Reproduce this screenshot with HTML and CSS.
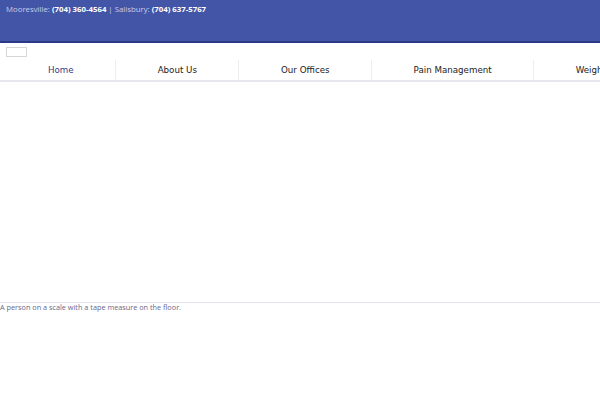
FILE: index.html
```html
<!DOCTYPE html>
<html>
<head>
	<meta charset="UTF-8">
	<title>Weight Loss</title>
	<link rel="stylesheet" href="styles.css">
</head>
<body>
	<div class="topbar">
		<div class="phones">
			Mooresville: <b>(704) 360-4564</b> | Salisbury: <b>(704) 637-5767</b>
		</div>
	</div>
	<div class="menubtn"></div>
	<ul class="nav">
		<li class="active">Home</li>
		<li>About Us</li>
		<li>Our Offices</li>
		<li>Pain Management</li>
		<li>Weight Loss</li>
	</ul>
	<div class="hero"></div>
	<div class="caption">A person on a scale with a tape measure on the floor.</div>
</body>
</html>
```

FILE: styles.css
```css
*{
	margin:0px;
	padding:0px;
}
body{
	width: 600px;
	height: 400px;
	overflow: hidden;
	background: #fff;
	font-family: "DejaVu Sans", sans-serif;
}
.topbar{
	height: 41px;
	background-color: #4355a6;
	border-bottom: 2px solid #2d3888;
}
.phones{
	font-family: "Open Sans", sans-serif;
	font-size: 7.8px;
	line-height: 18px;
	padding-left: 6px;
	color: #c9cdeb;
}
.phones b{
	color: #fff;
	font-weight: 700;
}
.menubtn{
	width: 19px;
	height: 8px;
	border: 1px solid #d6d6d6;
	margin: 4px 0 0 6px;
}
.nav{
	display: flex;
	list-style: none;
	white-space: nowrap;
	overflow: hidden;
	margin-top: 3px;
	height: 20px;
	border-bottom: 2px solid #e6e6ee;
}
.nav li{
	flex: none;
	font-size: 8.7px;
	line-height: 20px;
	color: #222;
	padding: 0 41px 0 42px;
	border-right: 1px solid #eeeeee;
}
.nav li.active{
	color: #2e3a8c;
	padding-left: 48px;
}
.nav li:last-child{
	border-right: none;
}
.hero{
	height: 220px;
	border-bottom: 1px solid #e4e4ea;
}
.caption{
	font-family: "Open Sans", sans-serif;
	font-size: 7.3px;
	line-height: 8px;
	color: #66678e;
}
```
